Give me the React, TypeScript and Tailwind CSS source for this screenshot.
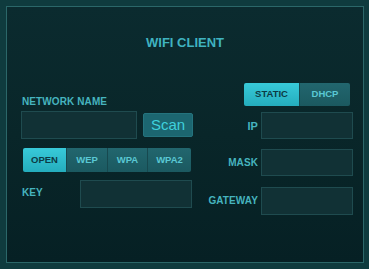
import React from "react";

const label = "text-[10px] leading-[12px] font-bold text-[#46b4bf] tracking-[0.1px]";
const input = "bg-[#113135] border border-[#1f4b4f]";

function Seg({ items, active, widths }: { items: string[]; active: number; widths: string[] }) {
  return (
    <div className="flex h-full rounded-[2px] overflow-hidden">
      {items.map((t, i) => (
        <div
          key={t}
          className={
            (i === active
              ? "bg-gradient-to-b from-[#38cad9] to-[#24adbd] text-[#0c3a44]"
              : "bg-gradient-to-b from-[#22666e] to-[#1b5960] text-[#5ac8d4]") +
            " flex items-center justify-center text-[9.5px] font-bold " +
            (i > 0 ? "border-l border-[#17494f] " : "") +
            widths[i]
          }
        >
          {t}
        </div>
      ))}
    </div>
  );
}

export default function App() {
  return (
    <div className="w-[369px] h-[269px] bg-[#0f3b3e] pt-[6px] pl-[6px] pr-[5px] pb-[6px] font-['Liberation_Sans',Arial,sans-serif]">
      <div className="w-full h-full border border-[#2b6769] bg-gradient-to-b from-[#0b2b2f] via-[#092629] to-[#062024] flex flex-col">
        <div className="pt-[28px] h-[76px] text-center text-[13px] leading-[16px] font-bold text-[#3fb3c0]">
          WIFI CLIENT
        </div>
        <div className="flex pl-[14px] pr-[10px]">
          <div className="w-[172px] pt-[13px] flex flex-col">
            <div className={label + " pl-[1px]"}>NETWORK NAME</div>
            <div className="flex items-center gap-[6px] mt-[3px]">
              <div className={input + " w-[116px] h-[28px]"} />
              <div className="w-[50px] h-[24px] rounded-[2px] bg-[#1c6670] border border-[#24737d] flex items-center justify-center text-[15px] text-[#3fd0dc]">
                Scan
              </div>
            </div>
            <div className="ml-[2px] mt-[9px] w-[168px] h-[24px]">
              <Seg
                items={["OPEN", "WEP", "WPA", "WPA2"]}
                active={0}
                widths={["w-[43px]", "w-[41px]", "w-[40px]", "w-[44px]"]}
              />
            </div>
            <div className="flex items-center justify-between mt-[8px] pl-[1px]">
              <div className={label + " -mt-[2px]"}>KEY</div>
              <div className={input + " w-[112px] h-[28px] mr-[1px]"} />
            </div>
          </div>
          <div className="flex-1 flex flex-col items-end">
            <div className="w-[106px] h-[23px] mr-[3px]">
              <Seg items={["STATIC", "DHCP"]} active={0} widths={["w-[55px]", "w-[51px]"]} />
            </div>
            <div className="flex items-center gap-[3px] mt-[6px]">
              <div className={label + " text-[11px]"}>IP</div>
              <div className={input + " w-[92px] h-[27px]"} />
            </div>
            <div className="flex items-center gap-[3px] mt-[10px]">
              <div className={label}>MASK</div>
              <div className={input + " w-[92px] h-[27px]"} />
            </div>
            <div className="flex items-center gap-[3px] mt-[11px]">
              <div className={label}>GATEWAY</div>
              <div className={input + " w-[92px] h-[28px]"} />
            </div>
          </div>
        </div>
      </div>
    </div>
  );
}
